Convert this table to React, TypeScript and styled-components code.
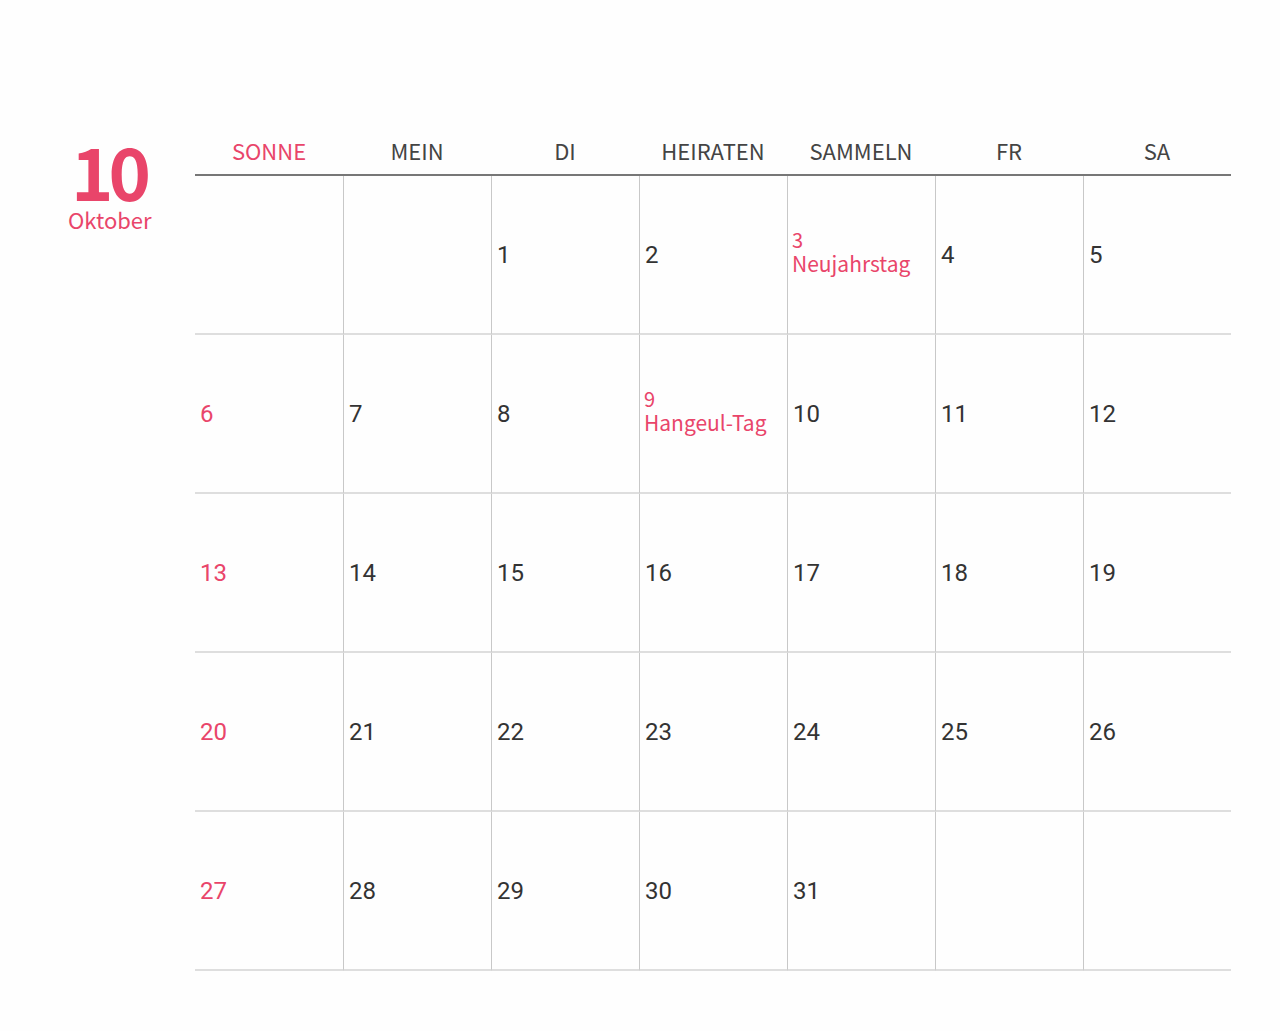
import React from "react";
import styled, { createGlobalStyle } from "styled-components";

const PINK = "#e9456a";
const SANS = `"Noto Sans CJK KR", "Noto Sans", sans-serif`;

const GlobalStyle = createGlobalStyle`
  body {
    margin: 0;
    background: #fefefe;
    font-family: ${SANS};
  }
`;

interface IDay {
  num: number;
  holiday?: string;
}

const weekdays = ["SONNE", "MEIN", "DI", "HEIRATEN", "SAMMELN", "FR", "SA"];

const holidays: Record<number, string> = {
  3: "Neujahrstag",
  9: "Hangeul-Tag",
};

// October starts on Tuesday -> two empty cells first
const buildCells = (): (IDay | null)[] => {
  const cells: (IDay | null)[] = [null, null];
  for (let d = 1; d <= 31; d++) cells.push({ num: d, holiday: holidays[d] });
  while (cells.length < 35) cells.push(null);
  return cells;
};

const App: React.FC = () => {
  const cells = buildCells();

  return (
    <>
      <GlobalStyle />
      <Page>
        <MonthBlock>
          <MonthNumber>10</MonthNumber>
          <MonthName>Oktober</MonthName>
        </MonthBlock>
        <Calendar>
          <HeaderRow>
            {weekdays.map((w, i) => (
              <HeaderCell key={w} $sunday={i === 0}>
                {w}
              </HeaderCell>
            ))}
          </HeaderRow>
          <Grid>
            {cells.map((c, i) => (
              <Cell key={i} $first={i % 7 === 0}>
                {c && c.holiday ? (
                  <Holiday>
                    <HolidayNum>{c.num}</HolidayNum>
                    <HolidayName>{c.holiday}</HolidayName>
                  </Holiday>
                ) : c ? (
                  <DayNum $sunday={i % 7 === 0}>{c.num}</DayNum>
                ) : null}
              </Cell>
            ))}
          </Grid>
        </Calendar>
      </Page>
    </>
  );
};

export default App;

const Page = styled.div`
  width: 1280px;
  height: 1031px;
  display: flex;
  box-sizing: border-box;
  padding: 134px 49px 0 67px;
`;

const MonthBlock = styled.div`
  width: 128px;
  display: flex;
  flex-direction: column;
  color: ${PINK};
  padding-top: 6px;
`;

const MonthNumber = styled.div`
  font-weight: 700;
  font-size: 72px;
  line-height: 60px;
  letter-spacing: -5px;
  margin-left: 4px;
`;

const MonthName = styled.div`
  font-size: 22px;
  line-height: 26px;
  margin-top: 6px;
  margin-left: 1px;
`;

const Calendar = styled.div`
  width: 1036px;
  display: flex;
  flex-direction: column;
`;

const HeaderRow = styled.div`
  display: grid;
  grid-template-columns: repeat(7, 1fr);
  height: 40px;
  border-bottom: 2px solid #777;
`;

const HeaderCell = styled.div<{ $sunday?: boolean }>`
  text-align: center;
  font-size: 22px;
  line-height: 32px;
  color: ${(p) => (p.$sunday ? PINK : "#444")};
`;

const Grid = styled.div`
  display: grid;
  grid-template-columns: repeat(7, 1fr);
  grid-auto-rows: 159px;
`;

const Cell = styled.div<{ $first?: boolean }>`
  border-left: ${(p) => (p.$first ? "none" : "1px solid #c8c8c8")};
  border-bottom: 2px solid #dedede;
  display: flex;
  align-items: center;
  padding-left: ${(p) => (p.$first ? "4px" : "4px")};
  box-sizing: border-box;
`;

const DayNum = styled.div<{ $sunday?: boolean }>`
  font-family: Roboto, sans-serif;
  font-size: 24px;
  color: ${(p) => (p.$sunday ? PINK : "#333")};
  margin-top: 1px;
  margin-left: 1px;
`;

const Holiday = styled.div`
  display: flex;
  flex-direction: column;
  color: ${PINK};
  margin-top: -6px;
`;

const HolidayNum = styled.div`
  font-size: 20px;
  line-height: 23px;
`;

const HolidayName = styled.div`
  font-size: 21px;
  line-height: 24px;
`;
